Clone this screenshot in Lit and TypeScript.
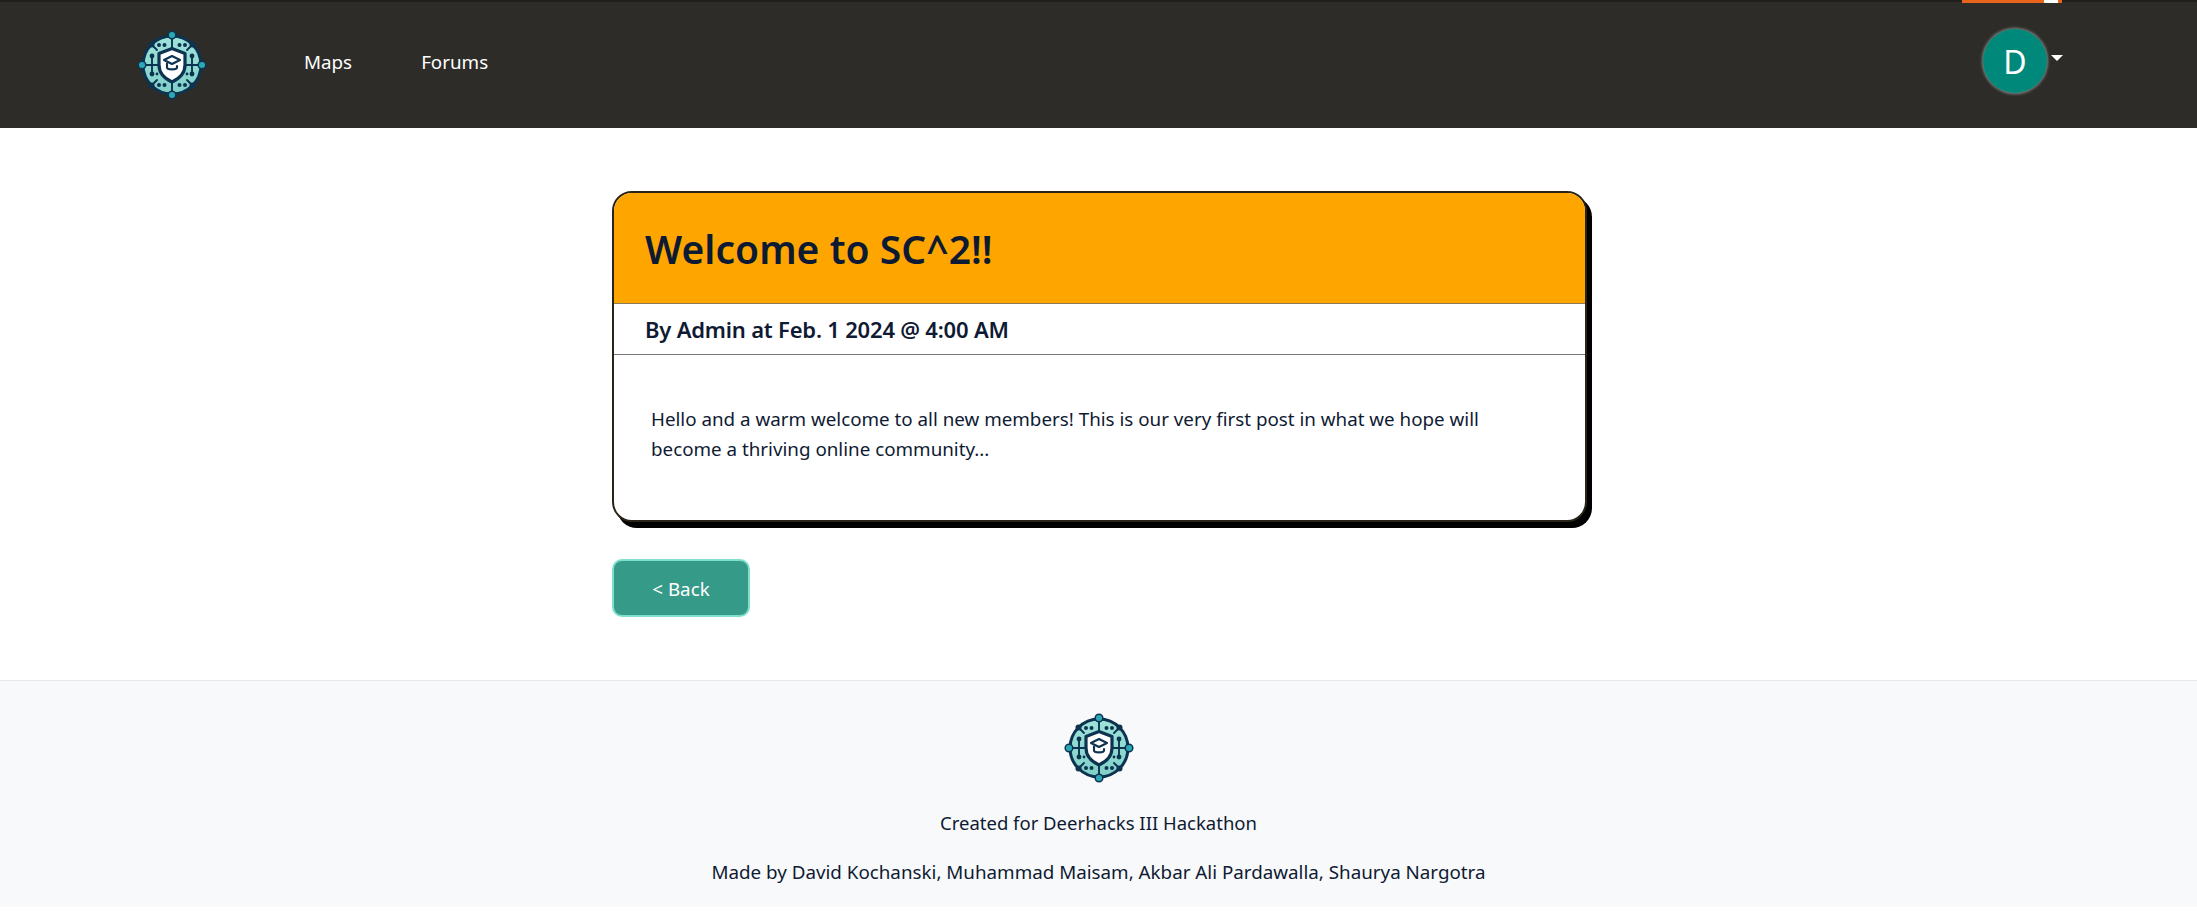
import { LitElement, html, css, svg } from "lit";
import { customElement } from "lit/decorators.js";

let gid = 0;
const logo = (size: number) => {
  const id = `mint${gid++}`;
  return html`<svg class="logo" width=${size} height=${size} viewBox="0 0 70 70" fill="none">
  ${svg`
  <defs><linearGradient id=${id} x1="0" y1="0" x2="0" y2="1"><stop offset="0" stop-color="#9fe3da"/><stop offset="1" stop-color="#7fd0c8"/></linearGradient></defs>
  <circle cx="35" cy="35" r="29" fill="url(#${id})" stroke="#0d3350" stroke-width="3"/>
  <g stroke="#0d3350" stroke-width="1.9" stroke-linecap="round">
    <path d="M35 6V19M35 51V64M6 35H22M48 35H64"/>
    <path d="M15 15L20 20M55 15L50 20M15 55L20 50M55 55L50 50"/>
    <path d="M15 27V43M55 27V43"/>
  </g>
  <g fill="#0d3350">
    <circle cx="14.5" cy="14.5" r="3"/><circle cx="55.5" cy="14.5" r="3"/><circle cx="14.5" cy="55.5" r="3"/><circle cx="55.5" cy="55.5" r="3"/>
    <circle cx="22" cy="15" r="2"/><circle cx="27.5" cy="15" r="2"/><circle cx="42.5" cy="15" r="2"/><circle cx="48" cy="15" r="2"/>
    <circle cx="22" cy="55" r="2"/><circle cx="27.5" cy="55" r="2"/><circle cx="42.5" cy="55" r="2"/><circle cx="48" cy="55" r="2"/>
    <circle cx="15" cy="26" r="2.4"/><circle cx="55" cy="26" r="2.4"/><circle cx="15" cy="44" r="2.4"/><circle cx="55" cy="44" r="2.4"/>
    <circle cx="20" cy="44" r="1.4"/><circle cx="50" cy="44" r="1.4"/>
  </g>
  <path d="M35 18.5L48 23.5V35C48 43.5 42.5 48.5 35 52C27.5 48.5 22 43.5 22 35V23.5Z" fill="#fff" stroke="#0d3350" stroke-width="3.2" stroke-linejoin="round"/>
  <path d="M35 26L43 30L35 34L27 30Z" stroke="#0d3350" stroke-width="2.1" stroke-linejoin="round"/>
  <path d="M30 33.5V37.5C30 40 40 40 40 37.5V36" stroke="#0d3350" stroke-width="2.1" stroke-linecap="round"/>
  <g fill="#2aa9b5" stroke="#0d3350" stroke-width="1.5">
    <circle cx="35" cy="5" r="3.8"/><circle cx="35" cy="65" r="3.8"/><circle cx="5" cy="35" r="3.8"/><circle cx="65" cy="35" r="3.8"/>
  </g>`}
</svg>`;
};

@customElement("app-root")
export class AppRoot extends LitElement {
  static styles = css`
    :host { display: block; font-family: "Noto Sans", "Open Sans", sans-serif; color: #0f1a33; background: #fff; }
    a { text-decoration: none; color: inherit; }
    .logo { display: block; flex: none; }
    .nav {
      position: relative;
      height: 128px; box-sizing: border-box;
      background: #2d2c29; border-top: 2px solid #1f1f1c;
      display: flex; align-items: center;
      padding: 0 134px 0 137px;
    }
    .progress {
      position: absolute; top: -2px; right: 135px;
      width: 100px; height: 3px; background: #e8641b;
    }
    .progress::after {
      content: ""; position: absolute; right: 4px; top: 0;
      width: 14px; height: 100%; background: #fff;
    }
    .links { display: flex; gap: 69px; margin: -7px 0 0 97px; color: #fff; font-size: 18.8px; }
    .user { margin: -8px 0 0 auto; display: flex; align-items: flex-start; gap: 4px; }
    .avatar {
      width: 64px; height: 64px; border-radius: 50%;
      background: #00897b; color: #fff;
      box-shadow: 0 0 3px 1px #8a8a88;
      display: flex; align-items: center; justify-content: center;
      font-size: 32px;
    }
    .caret {
      margin-top: 26px;
      width: 0; height: 0;
      border-left: 6px solid transparent; border-right: 6px solid transparent; border-top: 6px solid #fff;
    }
    main { width: 975px; margin: 0 auto 0 612px; padding: 63px 0; }
    .card {
      box-sizing: border-box;
      height: 331px;
      border: 2px solid #2a2418; border-radius: 20px;
      box-shadow: 5px 6px 0 #000;
      overflow: hidden; background: #fff;
      display: flex; flex-direction: column;
    }
    .head {
      height: 111px; box-sizing: border-box; flex: none;
      background: #ffa500; border-bottom: 1px solid #8a7a55;
      display: flex; align-items: center; padding: 0 31px;
    }
    h1 { margin: 0; font-size: 39px; font-weight: 600; color: #0c1a33; letter-spacing: 0.05px; }
    .by {
      height: 51px; box-sizing: border-box; flex: none;
      border-bottom: 1px solid #777;
      display: flex; align-items: center; padding: 0 31px 1px;
      font-size: 22px; font-weight: 600; letter-spacing: -0.2px;
    }
    .body { padding: 49px 37px; font-size: 18.8px; line-height: 30px; width: 860px; box-sizing: content-box; }
    .body p { margin: 0; }
    .back {
      margin-top: 37px; padding: 2px 0 0;
      display: flex; align-items: center; justify-content: center;
      width: 138px; height: 58px; box-sizing: border-box;
      background: #359a87; border: 2px solid #7fe0cc; border-radius: 10px;
      color: #fff; font-size: 18.8px; font-family: inherit;
    }
    footer {
      height: 227px; box-sizing: border-box;
      background: #f8f9fa; border-top: 1px solid #e5e7ea;
      display: flex; flex-direction: column; align-items: center;
      padding-top: 32px; font-size: 18.8px; color: #0f1a33;
    }
    footer p { margin: 0; line-height: 28px; }
    footer .l1 { margin-top: 26px; font-size: 18.5px; }
    footer .l2 { margin-top: 21px; }
  `;

  render() {
    return html`
      <nav class="nav">
        <div class="progress"></div>
        ${logo(70)}
        <div class="links"><a>Maps</a><a>Forums</a></div>
        <div class="user">
          <div class="avatar">D</div>
          <div class="caret"></div>
        </div>
      </nav>
      <main>
        <article class="card">
          <div class="head"><h1>Welcome to SC^2!!</h1></div>
          <div class="by">By Admin at Feb. 1 2024 @ 4:00 AM</div>
          <div class="body"><p>Hello and a warm welcome to all new members! This is our very first post in what we hope will become a thriving online community...</p></div>
        </article>
        <button class="back">&lt; Back</button>
      </main>
      <footer>
        ${logo(70)}
        <p class="l1">Created for Deerhacks III Hackathon</p>
        <p class="l2">Made by David Kochanski, Muhammad Maisam, Akbar Ali Pardawalla, Shaurya Nargotra</p>
      </footer>
    `;
  }
}
